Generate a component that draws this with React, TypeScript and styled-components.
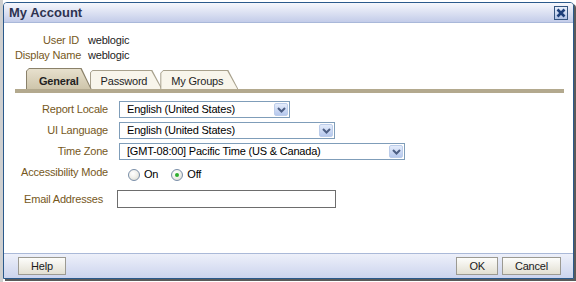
import React from 'react'
import styled, { createGlobalStyle } from 'styled-components'

const GlobalStyle = createGlobalStyle`
  html, body {
    margin: 0;
    padding: 0;
  }
  body {
    background: linear-gradient(to right, #cfcfcf 0 3px, #fff 3px);
    font-family: 'Liberation Sans', Arial, sans-serif;
    font-size: 11px;
    letter-spacing: -0.2px;
    color: #222;
  }
  * {
    box-sizing: border-box;
  }
`

const Dialog = styled.div`
  margin: 2px 2px 3px 3px;
  height: 277px;
  display: flex;
  flex-direction: column;
  border: 1px solid #2b5a8c;
  border-radius: 4px 4px 0 0;
  background: #fff;
  box-shadow: 2px 2px 0 #5a5a5a;
  overflow: hidden;
`

const TitleBar = styled.div`
  height: 20px;
  display: flex;
  align-items: center;
  justify-content: space-between;
  padding: 0 5px 0 5px;
  border-bottom: 1px solid #a9b8d9;
  background: linear-gradient(#f6f7fc, #c3cce9);
`

const Title = styled.div`
  font-size: 13px;
  font-weight: 700;
  letter-spacing: 0;
  color: #2e3350;
`

const CloseButton = styled.div`
  width: 14px;
  height: 14px;
  border: 1px solid #35557f;
  background: linear-gradient(#e8effb, #b0c2e6);
  display: flex;
  align-items: center;
  justify-content: center;
`

const Body = styled.div`
  flex: 1;
  padding: 10px 9px 0 11px;
`

const InfoGrid = styled.div`
  display: grid;
  grid-template-columns: 64px auto;
  column-gap: 9px;
  line-height: 15px;
`

const Label = styled.div`
  text-align: right;
  color: #76581c;
  white-space: nowrap;
`

const Value = styled.div`
  color: #222;
`

const TabStrip = styled.div`
  margin-top: 5px;
  padding-left: 11px;
  display: flex;
  align-items: flex-end;
  border-bottom: 4px solid #b3a98e;
`

const Tab = styled.div<{ $active?: boolean }>`
  position: relative;
  z-index: ${({ $active }) => ($active ? 2 : 1)};
  margin-left: -2px;
  padding: 1px 1px 0 1px;
  background: ${({ $active }) => ($active ? '#8a816a' : '#a7a08c')};
  clip-path: polygon(0 100%, 0 3px, 3px 0, calc(100% - 10px) 0, 100% 100%);

  &:first-child {
    margin-left: 0;
  }
`

const TabFace = styled.div<{ $active?: boolean }>`
  height: ${({ $active }) => ($active ? 20 : 18)}px;
  padding: ${({ $active }) => ($active ? '5px 12px 0 12px' : '3px 14px 0 10px')};
  line-height: 14px;
  white-space: nowrap;
  font-weight: ${({ $active }) => ($active ? 700 : 400)};
  color: #1f1f1f;
  background: ${({ $active }) =>
    $active ? 'linear-gradient(#e7e0cd, #cec5ab)' : '#f8f5eb'};
  clip-path: polygon(0 100%, 0 2px, 2px 0, calc(100% - 10px) 0, 100% 100%);
`

const Form = styled.div`
  padding-top: 8px;
  display: flex;
  flex-direction: column;
  gap: 4px;
`

const FieldRow = styled.div<{
  $labelWidth: number
  $gap: number
  $spaceAbove?: number
  $top?: boolean
}>`
  display: grid;
  grid-template-columns: ${({ $labelWidth }) => $labelWidth}px auto;
  column-gap: ${({ $gap }) => $gap}px;
  align-items: ${({ $top }) => ($top ? 'start' : 'center')};
  min-height: 17px;
  line-height: 17px;
  margin-top: ${({ $spaceAbove }) => $spaceAbove || 0}px;
`

const SelectBox = styled.div<{ $width: number }>`
  width: ${({ $width }) => $width}px;
  height: 17px;
  display: flex;
  align-items: center;
  justify-content: space-between;
  padding-left: 7px;
  border: 1px solid #7f9db9;
  background: #fff;
  color: #000;
  line-height: 15px;
  white-space: nowrap;
`

const DropButton = styled.span`
  width: 14px;
  height: 13px;
  margin-right: 1px;
  border: 1px solid #bccdea;
  border-radius: 2px;
  background: linear-gradient(#e4ecfb, #b6c8ed);
  display: flex;
  align-items: center;
  justify-content: center;
`

const RadioGroup = styled.div`
  display: flex;
  align-items: center;
  gap: 13px;
  padding: 4px 0 0 9px;
`

const RadioOption = styled.label`
  display: flex;
  align-items: center;
  gap: 4px;
  line-height: 13px;
  color: #000;
`

const RadioCircle = styled.span<{ $checked?: boolean }>`
  width: 12px;
  height: 12px;
  border-radius: 50%;
  border: 1px solid #7a8ea8;
  background: radial-gradient(circle at 40% 35%, #ffffff 0, #f1f1ec 45%, #d6d6cc 100%);
  display: flex;
  align-items: center;
  justify-content: center;

  &::after {
    content: '';
    display: ${({ $checked }) => ($checked ? 'block' : 'none')};
    width: 4px;
    height: 4px;
    border-radius: 50%;
    background: #2fae2f;
  }
`

const TextInput = styled.div`
  width: 219px;
  height: 18px;
  border: 1px solid #6d6d6d;
  background: #fff;
`

const Footer = styled.div`
  height: 25px;
  display: flex;
  align-items: flex-start;
  padding: 3px 12px 0 14px;
  border-top: 1px solid #aab9d8;
  background: linear-gradient(#edf0fa, #ccd4ee);
`

const ButtonGroup = styled.div`
  margin-left: auto;
  display: flex;
  gap: 4px;
`

const Button = styled.div`
  height: 18px;
  padding: 0 12px;
  line-height: 16px;
  border: 1px solid #9c9a92;
  background: linear-gradient(#fdfdfb, #e2dfd2);
  color: #1a1a1a;
`

function Chevron(): JSX.Element {
  return (
    <svg width="9" height="6" viewBox="0 0 9 6">
      <path
        d="M1 1 L4.5 4.5 L8 1"
        fill="none"
        stroke="#4d5f84"
        strokeWidth="2"
      />
    </svg>
  )
}

function Select({ width, value }: { width: number; value: string }) {
  return (
    <SelectBox $width={width}>
      <span>{value}</span>
      <DropButton>
        <Chevron />
      </DropButton>
    </SelectBox>
  )
}

function App(): JSX.Element {
  return (
    <>
      <GlobalStyle />
      <Dialog>
        <TitleBar>
          <Title>My Account</Title>
          <CloseButton>
            <svg width="10" height="10" viewBox="0 0 10 10">
              <path
                d="M1.5 1.5 L8.5 8.5 M8.5 1.5 L1.5 8.5"
                stroke="#1d3f7a"
                strokeWidth="2.6"
              />
              <rect x="3.5" y="3.5" width="3" height="3" fill="#1d3f7a" />
            </svg>
          </CloseButton>
        </TitleBar>
        <Body>
          <InfoGrid>
            <Label>User ID</Label>
            <Value>weblogic</Value>
            <Label>Display Name</Label>
            <Value>weblogic</Value>
          </InfoGrid>
          <TabStrip>
            <Tab $active>
              <TabFace $active>General</TabFace>
            </Tab>
            <Tab>
              <TabFace>Password</TabFace>
            </Tab>
            <Tab>
              <TabFace>My Groups</TabFace>
            </Tab>
          </TabStrip>
          <Form>
            <FieldRow $labelWidth={93} $gap={11}>
              <Label>Report Locale</Label>
              <Select width={171} value="English (United States)" />
            </FieldRow>
            <FieldRow $labelWidth={93} $gap={11}>
              <Label>UI Language</Label>
              <Select width={216} value="English (United States)" />
            </FieldRow>
            <FieldRow $labelWidth={93} $gap={11}>
              <Label>Time Zone</Label>
              <Select width={286} value="[GMT-08:00] Pacific Time (US & Canada)" />
            </FieldRow>
            <FieldRow $labelWidth={93} $gap={11} $top>
              <Label>Accessibility Mode</Label>
              <RadioGroup>
                <RadioOption>
                  <RadioCircle />
                  On
                </RadioOption>
                <RadioOption>
                  <RadioCircle $checked />
                  Off
                </RadioOption>
              </RadioGroup>
            </FieldRow>
            <FieldRow $labelWidth={88} $gap={14} $spaceAbove={5}>
              <Label>Email Addresses</Label>
              <TextInput />
            </FieldRow>
          </Form>
        </Body>
        <Footer>
          <Button>Help</Button>
          <ButtonGroup>
            <Button>OK</Button>
            <Button>Cancel</Button>
          </ButtonGroup>
        </Footer>
      </Dialog>
    </>
  )
}

export default App
